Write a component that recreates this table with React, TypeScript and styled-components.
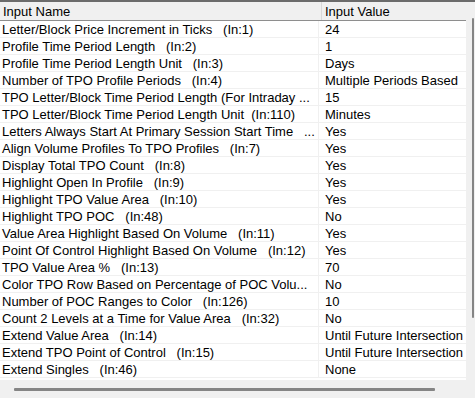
import React, { FC } from 'react';
import styled, { createGlobalStyle } from 'styled-components';

interface Input {
  name: string;
  value: string;
}

const inputs: Input[] = [
  { name: 'Letter/Block Price Increment in Ticks   (In:1)', value: '24' },
  { name: 'Profile Time Period Length   (In:2)', value: '1' },
  { name: 'Profile Time Period Length Unit   (In:3)', value: 'Days' },
  { name: 'Number of TPO Profile Periods   (In:4)', value: 'Multiple Periods Based' },
  { name: 'TPO Letter/Block Time Period Length (For Intraday ...', value: '15' },
  { name: 'TPO Letter/Block Time Period Length Unit  (In:110)', value: 'Minutes' },
  { name: 'Letters Always Start At Primary Session Start Time   ...', value: 'Yes' },
  { name: 'Align Volume Profiles To TPO Profiles   (In:7)', value: 'Yes' },
  { name: 'Display Total TPO Count   (In:8)', value: 'Yes' },
  { name: 'Highlight Open In Profile   (In:9)', value: 'Yes' },
  { name: 'Highlight TPO Value Area   (In:10)', value: 'Yes' },
  { name: 'Highlight TPO POC   (In:48)', value: 'No' },
  { name: 'Value Area Highlight Based On Volume   (In:11)', value: 'Yes' },
  { name: 'Point Of Control Highlight Based On Volume   (In:12)', value: 'Yes' },
  { name: 'TPO Value Area %   (In:13)', value: '70' },
  { name: 'Color TPO Row Based on Percentage of POC Volu...', value: 'No' },
  { name: 'Number of POC Ranges to Color   (In:126)', value: '10' },
  { name: 'Count 2 Levels at a Time for Value Area   (In:32)', value: 'No' },
  { name: 'Extend Value Area   (In:14)', value: 'Until Future Intersection' },
  { name: 'Extend TPO Point of Control   (In:15)', value: 'Until Future Intersection' },
  { name: 'Extend Singles   (In:46)', value: 'None' },
];

const App: FC = () => (
  <>
    <GlobalStyle />
    <Frame>
      <Body>
        <Grid>
          <Header>
            <HeaderCell width={318}>Input Name</HeaderCell>
            <HeaderCell>Input Value</HeaderCell>
          </Header>
          {inputs.map(input => (
            <Row key={input.name}>
              <NameCell>{input.name}</NameCell>
              <ValueCell>{input.value}</ValueCell>
            </Row>
          ))}
        </Grid>
        <VScroll>
          <VThumb />
        </VScroll>
      </Body>
      <HScroll>
        <HThumb />
      </HScroll>
    </Frame>
  </>
);

export default App;

const GlobalStyle = createGlobalStyle`
  body {
    margin: 0;
    background: #f0f0f0;
    font-family: 'Liberation Sans', Arial, sans-serif;
    font-size: 13px;
    color: #000000;
  }
`;

const Frame = styled.div`
  width: 475px;
  height: 398px;
  display: flex;
  flex-direction: column;
  border-top: 2px solid #6b6b6b;
  box-sizing: border-box;
  background: #f0f0f0;
  overflow: hidden;
`;

const Body = styled.div`
  display: flex;
`;

const Grid = styled.div`
  width: 466px;
  display: flex;
  flex-direction: column;
  background: #ffffff;
  padding-bottom: 2px;
`;

const Header = styled.div`
  display: flex;
  height: 18px;
  background: #f0f0f0;
  border-bottom: 1px solid #8e8e8e;
`;

interface HeaderCellProps {
  width?: number;
}

const HeaderCell = styled.div<HeaderCellProps>`
  ${({ width }) => (width ? `width: ${width}px; border-right: 1px solid #d9d9d9;` : 'flex: 1;')}
  padding: 2px 0 0 3px;
  line-height: 16px;
  white-space: nowrap;
  overflow: hidden;
`;

const Row = styled.div`
  display: flex;
  height: 16px;
  border-bottom: 1px solid #f0f0f0;
`;

const NameCell = styled.div`
  width: 319px;
  padding: 1px 0 0 2px;
  box-sizing: border-box;
  border-right: 1px solid #f0f0f0;
  line-height: 16px;
  white-space: pre;
  overflow: hidden;
`;

const ValueCell = styled.div`
  flex: 1;
  padding: 1px 0 0 6px;
  line-height: 16px;
  white-space: nowrap;
  overflow: hidden;
`;

const VScroll = styled.div`
  flex: 1;
  display: flex;
  justify-content: flex-end;
  padding: 16px 1px 0 0;
`;

const VThumb = styled.div`
  width: 2px;
  height: 300px;
  background: #858585;
  border-radius: 1px;
`;

const HScroll = styled.div`
  flex: 1;
  display: flex;
  align-items: center;
  padding: 0 0 0 14px;
`;

const HThumb = styled.div`
  width: 421px;
  height: 3px;
  background: #858585;
  border-radius: 1px;
`;
